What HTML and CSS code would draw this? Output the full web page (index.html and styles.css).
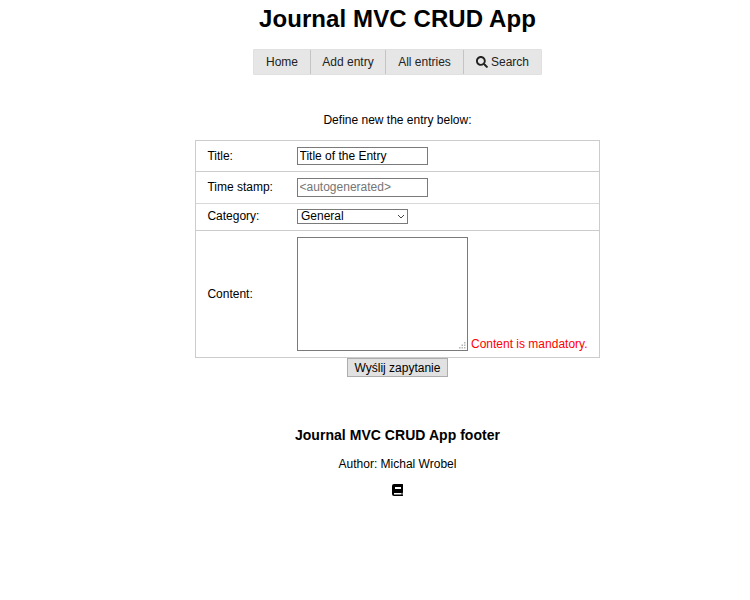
FILE: index.html
```
<!DOCTYPE html>
<html lang="pl">
<head>
<meta charset="utf-8">
<title>Journal MVC CRUD App</title>
<link rel="stylesheet" href="styles.css">
</head>
<body>
<header>
<h1>Journal MVC CRUD App</h1>
<nav class="menu">
<a class="item home">Home</a>
<a class="item add">Add entry</a>
<a class="item all">All entries</a>
<a class="item search"><svg class="glass" viewBox="0 0 512 512"><path fill="currentColor" d="M505 442.7 405.300 343c-4.500-4.500-10.600-7-17-7H372c27.600-35.300 44-79.700 44-128C416 93.100 322.900 0 208 0S0 93.100 0 208s93.100 208 208 208c48.300 0 92.700-16.400 128-44v16.300c0 6.400 2.500 12.500 7 17l99.700 99.700c9.400 9.400 24.600 9.400 33.900 0l28.300-28.300c9.400-9.400 9.400-24.600.100-34zM208 336c-70.700 0-128-57.200-128-128 0-70.700 57.200-128 128-128 70.700 0 128 57.200 128 128 0 70.700-57.200 128-128 128z"/></svg><span>Search</span></a>
</nav>
</header>
<main>
<p class="intro">Define new the entry below:</p>
<form>
<div class="panel">
<div class="row title-row"><label>Title:</label><input class="field title-field" value="Title of the Entry"></div>
<div class="row time-row"><label>Time stamp:</label><input class="field" placeholder="&lt;autogenerated&gt;"></div>
<div class="row cat-row"><label>Category:</label><div class="select"><span>General</span><svg class="chevron" viewBox="0 0 8 5"><path d="M1 1 4 4 7 1" fill="none" stroke="#444" stroke-width="1"/></svg></div></div>
<div class="row content-row"><label>Content:</label><div class="area"><svg class="grip" viewBox="0 0 7 7"><path fill="#b5b5b5" d="M5 0h1.500v1.500H5zM2.500 2.500H4V4H2.500zM5 2.500h1.500V4H5zM0 5h1.500v1.500H0zM2.500 5H4v1.500H2.500zM5 5h1.500v1.500H5z"/></svg></div><span class="error">Content is mandatory.</span></div>
</div>
<button class="submit" type="button">Wyślij zapytanie</button>
</form>
</main>
<footer>
<h2>Journal MVC CRUD App footer</h2>
<p class="author">Author: Michal Wrobel</p>
<svg class="book" viewBox="0 0 11 12"><path fill-rule="evenodd" d="M2 0H10.500Q11 0 11 .5V8.500Q10.500 9 10.500 9.500T11 11.500Q11 12 10.500 12H2Q0 12 0 10V2Q0 0 2 0zM3 3V5H9V3zM2 9V10.500H9.500V9z"/></svg>
</footer>
</body>
</html>
```
FILE: styles.css
```
* { box-sizing: border-box; }
body {
  margin: 0;
  padding-left: 45px;
  background: #fff;
  color: #000;
  font: 12px/16px "Liberation Sans", Arial, sans-serif;
}
header, main, form, footer { display: flex; flex-direction: column; align-items: center; }
h1 { margin: 5px 0 0; font-size: 24px; line-height: 28px; letter-spacing: .1px; white-space: nowrap; }
.menu {
  display: flex;
  width: 289px;
  height: 26px;
  margin-top: 16px;
  background: #e6e6e6;
  border: 1px solid #e0e0e0;
  border-radius: 1px;
  color: #222;
}
.item { display: flex; align-items: center; justify-content: center; border-right: 1px solid #c4c4c4; white-space: nowrap; }
.home { width: 57px; }
.add { width: 75px; }
.all { width: 78px; }
.search { flex: 1; gap: 3px; border-right: 0; }
.glass { width: 12px; height: 12px; }
.intro { margin: 37px 0 12px; }
.panel { width: 405px; border: 1px solid #ccc; }
.row { display: flex; align-items: center; padding-left: 11px; }
.row + .row { border-top: 1px solid #ccc; }
.row label { width: 90px; padding-left: .4px; }
.title-row { height: 30px; }
.time-row { height: 32px; padding-bottom: 1px; }
.row.cat-row { height: 27px; padding-bottom: 1px; border-top-color: #d8d8d8; }
.cat-row label { padding-bottom: 1px; }
.content-row { height: 127px; }
.field {
  width: 131px;
  height: 19px;
  padding: 0 1.500px;
  border: 1px solid #7a7a7a;
  border-radius: 0;
  background: #fff;
  color: #000;
  font: inherit;
}
.title-field { height: 18px; }
.field::placeholder { color: #757575; }
.select {
  display: flex;
  align-items: center;
  justify-content: space-between;
  width: 111px;
  height: 15px;
  padding: 0 2px 0 3px;
  border: 1px solid #7a7a7a;
}
.select span { line-height: 13px; }
.chevron { width: 8px; height: 5px; }
.area {
  display: flex;
  align-items: flex-end;
  justify-content: flex-end;
  width: 171px;
  height: 114px;
  padding: 0 1px 1px 0;
  border: 1px solid #7a7a7a;
}
.grip { width: 7px; height: 7px; }
.error { align-self: flex-end; margin: 0 0 5px 3px; color: #f00; white-space: nowrap; }
.submit {
  width: 101px;
  height: 19px;
  margin: 0;
  padding: 0;
  border: 1px solid #adadad;
  border-radius: 0;
  background: #e1e1e1;
  color: #000;
  font: inherit;
  white-space: nowrap;
}
h2 { margin: 49px 0 0; font-size: 14px; line-height: 18px; letter-spacing: .04px; }
.author { margin: 12px 0; }
.book { width: 11px; height: 12px; }
```
